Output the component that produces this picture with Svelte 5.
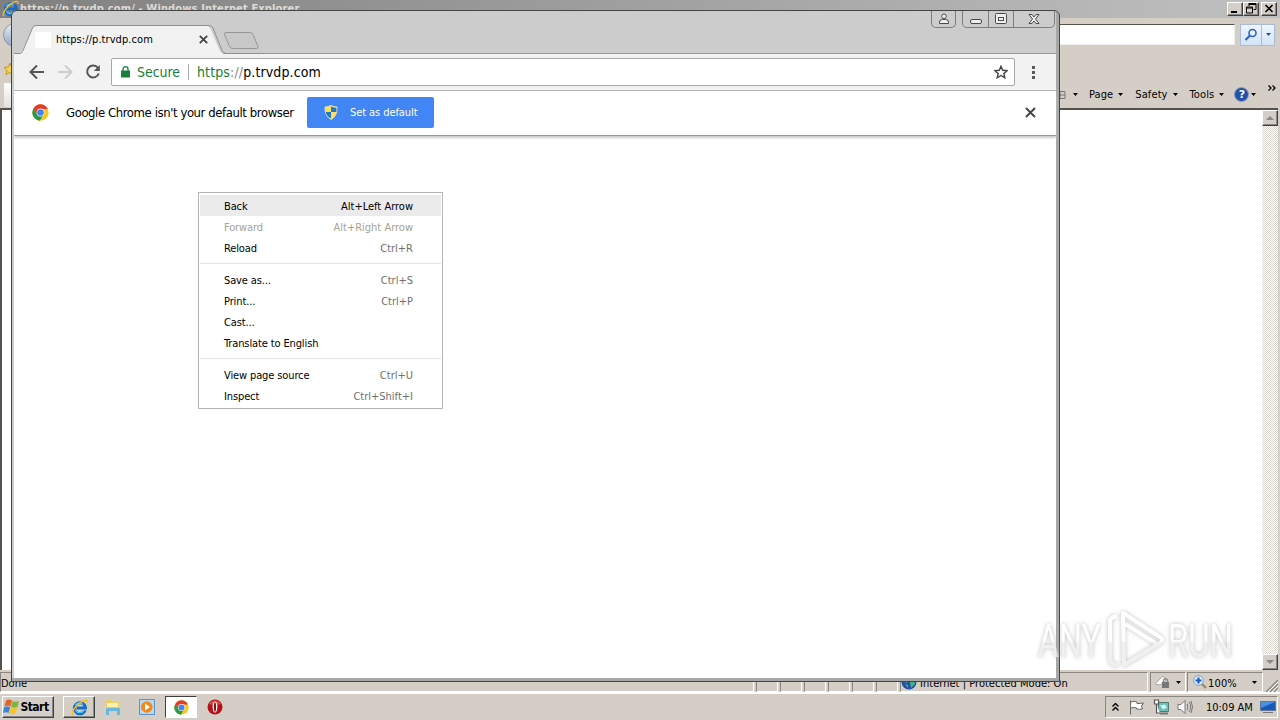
<script lang="ts">
	type Item = { label: string; keys?: string; state?: string };

	const groups: Item[][] = [
		[
			{ label: 'Back', keys: 'Alt+Left Arrow', state: 'active' },
			{ label: 'Forward', keys: 'Alt+Right Arrow', state: 'disabled' },
			{ label: 'Reload', keys: 'Ctrl+R' },
		],
		[
			{ label: 'Save as...', keys: 'Ctrl+S' },
			{ label: 'Print...', keys: 'Ctrl+P' },
			{ label: 'Cast...' },
			{ label: 'Translate to English' },
		],
		[
			{ label: 'View page source', keys: 'Ctrl+U' },
			{ label: 'Inspect', keys: 'Ctrl+Shift+I' },
		],
	];
	const commands = ['Page', 'Safety', 'Tools'];
</script>

{#snippet arrow()}
	<svg class="arrow" width="5" height="3" viewBox="0 0 5 3"><path d="M0 0h5L2.500 3z" fill="#000" /></svg>
{/snippet}

{#snippet chromeLogo(size: number)}
	<svg width={size} height={size} viewBox="0 0 48 48">
		<circle cx="24" cy="24" r="23" fill="#fbc91c" />
		<path d="M4.100 12.500A23 23 0 0 1 43.900 12.500L44 14H24L14 29.500z" fill="#e33b2e" />
		<path d="M4.100 12.500A23 23 0 0 0 22 47L33 29 24 34 14.500 29.500z" fill="#279a4b" />
		<circle cx="24" cy="24" r="11" fill="#fff" />
		<circle cx="24" cy="24" r="9.500" fill="#4584ee" />
	</svg>
{/snippet}

{#snippet ieLogo(size: number)}
	<svg width={size} height={size} viewBox="0 0 20 20">
		<path d="M16.600 13.200A6.500 6.500 0 1 1 17 10.500H6.500" fill="none" stroke="#176bc8" stroke-width="3.600" />
		<path d="M15.500 12.800A6 6 0 0 1 5 13M5 7.500a6 6 0 0 1 9-1" fill="none" stroke="#55c5f7" stroke-width="1.600" />
		<path d="M2.500 19C-1 17 5 8 11 4.200 16 1 20 .500 18.500 4.500" fill="none" stroke="#f5bd24" stroke-width="1.700" />
	</svg>
{/snippet}

<div class="desktop">
	<div class="ie">
		<div class="ie-title">
			{@render ieLogo(17)}
			<span class="ie-name">https://p.trvdp.com/ - Windows Internet Explorer</span>
			<div class="ie-buttons">
				<span class="raised"><svg width="14" height="11"><path d="M3 8h6v2H3z" /></svg></span>
				<span class="raised"><svg width="14" height="11"><path d="M5 .500h7v6H9.500M5 0v3M5 1.500h7M2.500 4h6v6h-6zM2.500 5h6" fill="none" stroke="#000" /></svg></span>
				<span class="raised last"><svg width="14" height="11"><path d="M3.500 2l7 7M10.500 2l-7 7" stroke="#000" stroke-width="1.600" /></svg></span>
			</div>
		</div>
		<div class="ie-address">
			<span class="orb"></span>
			<div class="ie-field"></div>
			<div class="ie-search">
				<span class="lens">
					<svg width="14" height="14" viewBox="0 0 14 14"><circle cx="8.500" cy="5" r="3.500" fill="#eaf3ff" stroke="#2a62c4" stroke-width="1.600" /><path d="M6 7.500L1.500 12" stroke="#2a62c4" stroke-width="2.200" /></svg>
				</span>
				<span class="drop"><svg width="5" height="3"><path d="M0 0h5L2.500 3z" fill="#1d4f9c" /></svg></span>
			</div>
		</div>
		<div class="ie-side">
			<svg width="12" height="14" viewBox="0 0 12 14"><path d="M6 1l1.500 4 4 .500-3 3 1 4-3.500-2-4 2 1-4-3-3 4.500-.500z" fill="#f4d34d" stroke="#c39a1c" /></svg>
			<span class="ie-tab"></span>
		</div>
		<div class="ie-commands">
			<svg width="8" height="10" viewBox="0 0 8 10"><path d="M2 1.500h5v7H2zM0 5h7" fill="none" stroke="#777" /></svg>
			<span class="first">{@render arrow()}</span>
			{#each commands as command}
				<span class="command">{command}{@render arrow()}</span>
			{/each}
			<span class="help"><i>?</i>{@render arrow()}</span>
			<svg class="more" width="8" height="6"><path d="M.500 .500L3 3 .500 5.500M4.500 .500L7 3 4.500 5.500" fill="none" stroke="#000" stroke-width="1.300" /></svg>
		</div>
		<div class="ie-page">
			<div class="scrollbar">
				<span class="raised scroll-btn"><svg width="8" height="4"><path d="M0 4h8L4 0z" fill="#888" /></svg></span>
				<span class="raised scroll-btn"><svg width="8" height="4"><path d="M0 0h8L4 4z" fill="#888" /></svg></span>
			</div>
		</div>
		<div class="ie-status">
			<span class="cell done">Done</span>
			{#each { length: 6 } as _}
				<span class="cell small"></span>
			{/each}
			<span class="cell zone">
				<svg width="16" height="16" viewBox="0 0 16 16"><circle cx="8" cy="8" r="7.500" fill="#2450a8" /><path d="M3 3l5-1 1 4-4 3-3-2zM9 8l4-2 1 4-4 4zM4 10l3 1v3z" fill="#44b57c" /></svg>
				<b>Internet | Protected Mode: On</b>
			</span>
			<span class="cell lock">
				<svg width="16" height="14" viewBox="0 0 16 14"><path d="M0 9L8 1l3 4-6 5z" fill="#fff" stroke="#aaa" /><path d="M7 7h7v6H7z" fill="#777" /><path d="M8.500 7V5q2-3 4 0v2" fill="none" stroke="#888" stroke-width="1.400" /></svg>
				{@render arrow()}
			</span>
			<span class="cell zoom">
				<svg width="14" height="14" viewBox="0 0 14 14"><path d="M8.500 8.500L13 13" stroke="#a58b55" stroke-width="2.400" /><circle cx="5.500" cy="5.500" r="4.800" fill="#e6f1ff" stroke="#6f9ddc" /><path d="M5.500 2.500v6M2.500 5.500h6" stroke="#1d5cc0" stroke-width="2.200" /></svg>
				<span class="percent">100%</span>{@render arrow()}
			</span>
			<svg class="grip" width="12" height="12"><path d="M0 12L12 0M4 12l8-8M8 12l4-4" stroke="#888" stroke-width="1.500" /><path d="M2 12L12 2M6 12l6-6M10 12l2-2" stroke="#fff" /></svg>
		</div>
	</div>

	<div class="taskbar">
		<div class="task start raised">
			<svg width="17" height="16" viewBox="0 0 17 16">
				<path d="M3 1.500q3-2 6 0L7.500 7.500q-3-1.500-6 0z" fill="#e8622c" />
				<path d="M9.500 2q3 1.500 6.500 0l-1.500 6q-3 1.500-6.500 0z" fill="#7bb642" />
				<path d="M1.200 8.200q3-1.500 6 0L5.500 14q-2.500-1.500-5.500 0z" fill="#3b83d6" />
				<path d="M7.700 8.500q3 1.500 6.500 0l-1.500 6q-3 1.500-6.500 0z" fill="#f5c62c" />
			</svg>
			<b>Start</b>
		</div>
		<div class="task raised ie-task">{@render ieLogo(17)}</div>
		<div class="task plain">
			<svg width="16" height="16" viewBox="0 0 16 16"><path d="M1 1h5l1 2h7v10H1z" fill="#e9cf68" /><path d="M2 4h11v7H2z" fill="#fbf0ae" /><path d="M1 16v-6q0-1.500 2-1.500h10q2 0 2 1.500v6h-3v-4H4v4z" fill="#6cb8da" /></svg>
		</div>
		<div class="task plain">
			<svg width="16" height="16" viewBox="0 0 16 16"><path d="M.500 .500h15v15H.500z" fill="#b9d9f3" stroke="#5c93c8" /><circle cx="7.800" cy="8" r="5.800" fill="#f08a1c" /><path d="M6 4.500L11 8l-5 3.500z" fill="#fff" /></svg>
		</div>
		<div class="task pressed">{@render chromeLogo(15)}</div>
		<div class="task plain">
			<svg width="16" height="16" viewBox="0 0 16 16"><circle cx="8" cy="8" r="7.500" fill="#b51218" /><path d="M2 5a6.800 6.800 0 0 1 12 0q-6 2-12 0" fill="#d94b4b" /><ellipse cx="8" cy="8" rx="2.400" ry="5.500" fill="#fff" /><ellipse cx="8" cy="8" rx="1.100" ry="4.800" fill="#8a1014" /></svg>
		</div>
		<div class="tray">
			<svg width="7" height="9"><path d="M.500 3.500l3-3 3 3M.500 7.500l3-3 3 3" fill="none" stroke="#000" stroke-width="1.400" /></svg>
			<svg class="flag" width="16" height="15" viewBox="0 0 16 15"><path d="M1.500 .500v14M2 2q3-1.500 6 0v1.500q3 0 6.500-.500l-2 3 1 3q-3 .500-6 0V8Q5 7 2 8" fill="#fff" stroke="#666" /></svg>
			<svg width="17" height="16" viewBox="0 0 17 16"><path d="M5.500 3.500h10v9h-10z" fill="#67c2b4" stroke="#507a76" /><path d="M7 6.500l5-1 2 3-4 2z" fill="#d6f3ee" /><path d="M7 14.500h8" stroke="#777" stroke-width="2" /><path d="M1.500 1v4h4V1zM3.500 5v9H7" fill="#fff" stroke="#555" stroke-width="1.200" /></svg>
			<svg class="speaker" width="17" height="16" viewBox="0 0 17 16"><path d="M1 5.500h3l4-4v13l-4-4H1z" fill="#fff" stroke="#777" /><path d="M10 5q2 3 0 6M12 3q3.500 5 0 10M14 2q3 6 0 12" fill="none" stroke="#777" /></svg>
			<span class="clock">10:09 AM</span>
			<svg width="16" height="14" viewBox="0 0 16 14"><path d="M.500 1.500h15v9H.500z" fill="#1659b7" stroke="#637895" /><path d="M1 2h14L1 8z" fill="#4a91e4" /><path d="M3 12.500h10" stroke="#777" /></svg>
		</div>
	</div>

	<div class="chrome">
		<div class="tabstrip">
			<svg class="tabs" width="250" height="29" viewBox="0 0 250 29">
				<path d="M0 29h2q5-.500 6.500-4L18 4q1.500-3.500 5-3.500h168q4 0 5.500 3.500l9 21q1.500 3.500 5 4z" fill="#f2f2f2" />
				<path d="M0 28.500h6q2 0 3-3L18.500 3Q19.500 .500 22 .500h173q3 0 4 2.500l9 22.500q1 3 4 3h38" fill="none" stroke="#8f8f8f" />
				<path d="M212 7.500h24q2 0 3 2l5 12q.500 2-1.500 2h-24q-2 0-3-2l-5-12q-.500-2 1.500-2z" fill="#c8c8c8" stroke="#969696" />
			</svg>
			<div class="tab">
				<span class="favicon"></span>
				<span class="tab-title">https://p.trvdp.com</span>
				<svg width="9" height="9"><path d="M.800 .800l7.400 7.400M8.200 .800L.800 8.200" stroke="#444" stroke-width="1.800" /></svg>
			</div>
			<div class="controls">
				<span class="user"><svg width="12" height="12" viewBox="0 0 12 12"><circle cx="6" cy="3.300" r="2.300" /><path d="M1.500 10.500V9q0-2.500 3-2.500h3q3 0 3 2.500v1.500z" /></svg></span>
				<div class="trio">
					<span><svg width="12" height="12"><rect x=".5" y="6.500" width="11" height="4" rx="1.500" /></svg></span>
					<span><svg width="12" height="12"><rect x=".5" y=".5" width="11" height="10" rx="1" /><rect x="3.500" y="4.500" width="5" height="3" /></svg></span>
					<span class="wide"><svg width="12" height="12"><path d="M1 1.500h3l2 2.500 2-2.500h3L7.500 6l3.500 4.500H8L6 8l-2 2.500H1L4.500 6z" /></svg></span>
				</div>
			</div>
		</div>
		<div class="toolbar">
			<svg class="back" width="16" height="16" viewBox="0 0 16 16"><path d="M15 8H2.500M8 1.500L1.500 8 8 14.500" /></svg>
			<svg class="forward" width="16" height="16" viewBox="0 0 16 16"><path d="M1 8h12.500M8 1.500L14.500 8 8 14.500" /></svg>
			<svg class="reload" width="16" height="16" viewBox="0 0 16 16"><path d="M13 4A6 6 0 1 0 13.800 9.500" /><path d="M14.800 1v6h-6z" class="solid" /></svg>
			<div class="omnibox">
				<svg width="9" height="12" viewBox="0 0 9 12"><path d="M0 4.500h9V11.500H0z" fill="#188038" /><path d="M2 5V3.200a2.500 2.500 0 0 1 5 0V5" fill="none" stroke="#188038" stroke-width="1.300" /></svg>
				<span class="secure">Secure</span>
				<span class="url"><em>https</em><i>://</i>p.trvdp.com</span>
				<svg class="star" width="14" height="14" viewBox="0 0 14 14"><path d="M7 1.300l1.700 4 4.400.4-3.300 2.900 1 4.200L7 10.500l-3.800 2.300 1-4.200L.9 5.700l4.400-.4z" fill="none" stroke="#444" stroke-width="1.400" /></svg>
			</div>
			<svg class="dots" width="3" height="13"><path d="M0 0h3v3H0zM0 5h3v3H0zM0 10h3v3H0z" fill="#5a5a5a" /></svg>
		</div>
		<div class="infobar">
			{@render chromeLogo(17)}
			<span class="message">Google Chrome isn't your default browser</span>
			<button type="button" class="default-btn">
				<svg width="14" height="15" viewBox="0 0 14 15">
					<path d="M7 .500q3 1.500 6 1.500.500 9-6 12.500Q.500 11 1 2q3 0 6-1.500z" fill="#ffdf5a" stroke="#e5e1bc" />
					<path d="M7 7V13.500Q2.500 11 1.700 7zM7 7V1.500Q9.500 2.800 12.400 2.800V7z" fill="#2476c9" />
				</svg>
				<span>Set as default</span>
			</button>
			<svg class="dismiss" width="11" height="11"><path d="M1 1l9 9M10 1l-9 9" stroke="#444" stroke-width="1.900" /></svg>
		</div>
		<div class="page"></div>
	</div>

	<div class="menu">
		{#each groups as group}
			<div class="group">
				{#each group as item}
					<div class="item {item.state ?? ''}">
						<span>{item.label}</span>
						{#if item.keys}<span class="keys">{item.keys}</span>{/if}
					</div>
				{/each}
			</div>
		{/each}
	</div>

	<svg class="watermark" width="220" height="76" viewBox="0 0 220 76">
		<defs>
			<linearGradient id="fade" gradientUnits="userSpaceOnUse" x1="0" y1="0" x2="0" y2="64">
				<stop offset="0.52" stop-color="#fff" />
				<stop offset="0.56" stop-color="#ececec" />
			</linearGradient>
		</defs>
		<g class="mark">
			<text x="4" y="50" textLength="63" lengthAdjust="spacingAndGlyphs">ANY</text>
			<path d="M89 6l37 24q4 3 0 6L90 58zM76 14q0-3 7-5M76 14v36q0 9 8 8M91 17l32 20" />
			<text x="134" y="50" textLength="65" lengthAdjust="spacingAndGlyphs">RUN</text>
		</g>
	</svg>
</div>

<style>
	:global(body) {
		overflow: hidden;
	}

	.desktop {
		position: relative;
		width: 1280px;
		height: 720px;
		overflow: hidden;
		background: #d5cec7;
		color: #000;
		font-family: 'DejaVu Sans Condensed', 'DejaVu Sans', sans-serif;
		font-stretch: condensed;
		font-size: 11px;
		letter-spacing: -0.12px;
		white-space: nowrap;
	}

	.desktop :global(svg) {
		display: block;
		flex: none;
	}

	.raised {
		box-sizing: border-box;
		background: #d5cec7;
		border: 1px solid;
		border-color: #fff #404040 #404040 #fff;
		box-shadow: inset -1px -1px #888;
	}

	/* Internet Explorer window */
	.ie {
		display: flex;
		flex-direction: column;
		height: 692px;
	}

	.ie-title {
		display: flex;
		align-items: center;
		height: 18px;
		padding: 0 3px 0 2px;
		background: linear-gradient(90deg, #808080, #c0c0c0);
	}

	.ie-name {
		flex: 1;
		margin-left: 1px;
		color: #dedad5;
		font-weight: bold;
		letter-spacing: 0.14px;
	}

	.ie-buttons {
		display: flex;
	}

	.ie-buttons .raised {
		width: 16px;
		height: 14px;
	}

	.ie-buttons .last {
		margin-left: 2px;
	}

	.ie-address {
		display: flex;
		align-items: center;
		height: 34px;
		padding-right: 5px;
	}

	.orb {
		width: 22px;
		height: 22px;
		margin-left: 3px;
		border: 1px solid #8d949c;
		border-radius: 50%;
		background: linear-gradient(#e8edf3, #8fa8c8);
	}

	.ie-field {
		flex: 1;
		height: 19px;
		margin-right: 5px;
		background: #fff;
		border: 1px solid #eee;
		border-top-color: #55514a;
	}

	.ie-search {
		display: flex;
		height: 20px;
		border: 1px solid #a9bdd6;
		background: linear-gradient(#eef5fd, #d4e4f6);
	}

	.lens,
	.drop {
		display: flex;
		align-items: center;
		justify-content: center;
		width: 20px;
	}

	.drop {
		width: 12px;
		border-left: 1px solid #a9bdd6;
	}

	.ie-side {
		display: flex;
		flex-direction: column;
		gap: 7px;
		height: 30px;
		margin: 10px 0 -40px 4px;
	}

	.ie-tab {
		width: 10px;
		height: 24px;
		flex: none;
		background: linear-gradient(#fff, #e4e0dc);
	}

	.ie-commands {
		display: flex;
		align-items: center;
		height: 24px;
		margin-top: 31px;
		margin-bottom: 1px;
		padding-left: 1058px;
	}

	.ie-commands .first {
		margin: 0 11px 0 7px;
	}

	.command {
		display: flex;
		align-items: center;
		gap: 5px;
		margin-right: 12px;
		letter-spacing: 0.1px;
	}

	.help {
		display: flex;
		align-items: center;
		gap: 2px;
		margin-left: -2px;
	}

	.help i {
		width: 13px;
		height: 13px;
		border: 1px solid #8e9fc4;
		border-radius: 50%;
		background: #2450ac;
		color: #fff;
		font: bold 11px/13px 'DejaVu Sans', sans-serif;
		text-align: center;
	}

	.more {
		margin: -13px 0 0 12px;
	}

	.ie-page {
		display: flex;
		justify-content: flex-end;
		height: 561px;
		margin-right: 2px;
		background: #fff;
		border-top: 2px solid #55524e;
		border-left: 2px solid #55524e;
	}

	.scrollbar {
		display: flex;
		flex-direction: column;
		justify-content: space-between;
		width: 16px;
		background: repeating-conic-gradient(#fff 0 25%, #dcd7d1 0 50%) 0 0 / 2px 2px;
	}

	.scroll-btn {
		display: flex;
		align-items: center;
		justify-content: center;
		height: 16px;
	}

	.ie-status {
		display: flex;
		align-items: stretch;
		height: 20px;
		margin-top: 2px;
	}

	.cell {
		box-sizing: border-box;
		display: flex;
		align-items: center;
		border: 1px solid;
		border-color: #8b8680 #fff #fff #8b8680;
	}

	.done {
		width: 754px;
		padding-top: 2px;
		letter-spacing: 0;
	}

	.small {
		width: 22px;
		margin-left: 2px;
	}

	.zone {
		width: 248px;
		margin-left: 2px;
		gap: 3px;
	}

	.zone b {
		padding-top: 2px;
		font-weight: normal;
		letter-spacing: 0.03px;
	}

	.lock {
		width: 36px;
		margin-left: 2px;
		padding-left: 4px;
		gap: 5px;
	}

	.zoom {
		width: 76px;
		margin-left: 1px;
		padding-left: 5px;
	}

	.percent {
		width: 29px;
		margin: 2px 15px 0 1px;
		letter-spacing: 0.15px;
	}

	.grip {
		align-self: flex-end;
		margin-left: 3px;
	}

	/* Taskbar */
	.taskbar {
		display: flex;
		align-items: center;
		height: 26px;
		padding: 0 2px;
		border-top: 2px solid #fff;
	}

	.task {
		display: flex;
		align-items: center;
		justify-content: center;
		box-sizing: border-box;
		width: 32px;
		height: 22px;
		margin-right: 2px;
	}

	.start {
		width: 52px;
		margin-right: 9px;
		padding-right: 4px;
	}

	.start b {
		font-size: 12px;
		letter-spacing: -0.5px;
	}

	.pressed {
		background: #fff;
		border: 1px solid;
		border-color: #404040 #fff #fff #404040;
	}

	.tray {
		display: flex;
		align-items: center;
		box-sizing: border-box;
		width: 173px;
		height: 22px;
		margin-left: auto;
		padding-left: 6px;
		border: 1px solid;
		border-color: #8b8680 #fff #fff #8b8680;
	}

	.flag {
		margin: 0 8px 0 10px;
	}

	.speaker {
		margin-left: 7px;
	}

	.clock {
		width: 47px;
		margin: 0 7px 0 12px;
		letter-spacing: -0.02px;
	}

	/* Chrome window */
	.chrome {
		position: absolute;
		top: 10px;
		left: 11px;
		box-sizing: border-box;
		display: flex;
		flex-direction: column;
		width: 1049px;
		height: 672px;
		padding: 0 3px 3px 2px;
		background: #ccc;
		border: 1px solid #454545;
		border-radius: 6px 6px 0 0;
		box-shadow: inset -3px -3px #a8a8a8;
	}

	.tabstrip {
		position: relative;
		display: flex;
		align-items: flex-end;
		height: 43px;
		flex: none;
		box-shadow: inset 0 -1px #999;
	}

	.tabs {
		position: absolute;
		left: 0;
		bottom: 0;
	}

	.tab {
		position: relative;
		display: flex;
		align-items: center;
		height: 29px;
		padding-left: 21px;
	}

	.favicon {
		width: 16px;
		height: 16px;
		margin-right: 5px;
		background: #fff;
	}

	.tab-title {
		width: 143px;
		letter-spacing: 0.07px;
	}

	.controls {
		display: flex;
		align-self: flex-start;
		margin-left: auto;
	}

	.controls span {
		display: flex;
		align-items: center;
		justify-content: center;
		width: 25px;
		height: 16px;
	}

	.controls svg {
		fill: #eee;
		stroke: #4a4a4a;
	}

	.controls .user,
	.trio {
		border: 1px solid #7d7d7d;
		border-top: 0;
		border-radius: 0 0 5px 5px;
	}

	.controls .user {
		width: 23px;
		margin-right: 6px;
	}

	.trio {
		display: flex;
		margin-right: 1px;
	}

	.trio span + span {
		border-left: 1px solid #7d7d7d;
		width: 24px;
	}

	.trio .wide {
		width: 40px !important;
	}

	.toolbar {
		display: flex;
		align-items: center;
		box-sizing: border-box;
		height: 37px;
		flex: none;
		padding-left: 15px;
		background: #f2f2f2;
		border-bottom: 1px solid #b6b6b6;
	}

	.toolbar .back,
	.forward,
	.reload {
		margin-right: 12px;
		fill: none;
		stroke: #555;
		stroke-width: 2;
	}

	.forward {
		stroke: #ccc !important;
	}

	.reload {
		margin-right: 10px;
	}

	.solid {
		fill: #555;
		stroke: none;
	}

	.omnibox {
		display: flex;
		align-items: center;
		box-sizing: border-box;
		width: 904px;
		height: 28px;
		padding: 0 6px 0 9px;
		background: #fff;
		border: 1px solid #a8a8a8;
		border-radius: 2px;
		font-size: 14px;
	}

	.secure {
		width: 51px;
		margin-left: 7px;
		color: #188038;
		letter-spacing: -0.05px;
	}

	.url {
		padding-left: 8px;
		border-left: 1px solid #aaa;
		letter-spacing: 0.12px;
	}

	.url em {
		color: #188038;
		font-style: normal;
	}

	.url i {
		color: #888;
		font-style: normal;
	}

	.star {
		margin-left: auto;
	}

	.dots {
		margin-left: 17px;
	}

	.infobar {
		position: relative;
		display: flex;
		align-items: center;
		box-sizing: border-box;
		height: 45px;
		flex: none;
		padding: 0 0 1px 18px;
		background: #fff;
		border-bottom: 1px solid #999;
		box-shadow: 0 2px 2px #ccc;
	}

	.message {
		width: 241px;
		margin-left: 17px;
		font-size: 13px;
		letter-spacing: -0.42px;
	}

	.default-btn {
		display: flex;
		align-items: center;
		width: 127px;
		height: 31px;
		padding: 0 0 0 17px;
		background: #4285f4;
		border: 0;
		border-radius: 2px;
		color: #fff;
		font: inherit;
		letter-spacing: -0.08px;
	}

	.default-btn span {
		margin-left: 12px;
	}

	.dismiss {
		margin: 0 20px 0 auto;
	}

	.page {
		flex: 1;
		background: #fff;
	}

	/* Context menu */
	.menu {
		position: absolute;
		top: 192px;
		left: 198px;
		box-sizing: border-box;
		width: 245px;
		height: 217px;
		padding: 2px 1px;
		background: #fff;
		border: 1px solid #b4b4b4;
	}

	.group + .group {
		margin-top: 5px;
		padding-top: 5px;
		border-top: 1px solid #e3e3e3;
	}

	.item {
		display: flex;
		align-items: center;
		justify-content: space-between;
		box-sizing: border-box;
		height: 21px;
		padding: 1px 28px 0 24px;
	}

	.keys {
		color: #707070;
		letter-spacing: 0;
	}

	.active {
		background: #ebebeb;
	}

	.active .keys {
		color: #000;
	}

	.disabled,
	.disabled .keys {
		color: #a5a294;
	}

	.watermark {
		position: absolute;
		top: 607px;
		left: 1034px;
		overflow: visible;
		filter: drop-shadow(0 0 2px #aaa);
		opacity: 0.75;
	}

	.mark {
		fill: url(#fade);
		font: 47px Roboto, sans-serif;
		letter-spacing: 0;
	}

	.mark path {
		fill: none;
		stroke: url(#fade);
		stroke-width: 4;
		stroke-linejoin: round;
	}
</style>
